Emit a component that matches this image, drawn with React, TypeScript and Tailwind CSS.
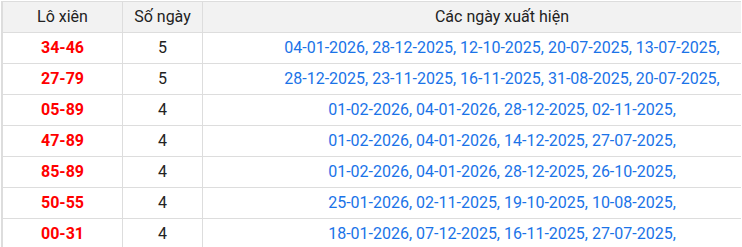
const rows = [
  { pair: '34-46', count: 5, dates: '04-01-2026, 28-12-2025, 12-10-2025, 20-07-2025, 13-07-2025,' },
  { pair: '27-79', count: 5, dates: '28-12-2025, 23-11-2025, 16-11-2025, 31-08-2025, 20-07-2025,' },
  { pair: '05-89', count: 4, dates: '01-02-2026, 04-01-2026, 28-12-2025, 02-11-2025,' },
  { pair: '47-89', count: 4, dates: '01-02-2026, 04-01-2026, 14-12-2025, 27-07-2025,' },
  { pair: '85-89', count: 4, dates: '01-02-2026, 04-01-2026, 28-12-2025, 26-10-2025,' },
  { pair: '50-55', count: 4, dates: '25-01-2026, 02-11-2025, 19-10-2025, 10-08-2025,' },
  { pair: '00-31', count: 4, dates: '18-01-2026, 07-12-2025, 16-11-2025, 27-07-2025,' },
];

export default function App() {
  return (
    <div className="w-[742px] h-[247px] overflow-hidden bg-white pl-px pt-px font-['Roboto',sans-serif] text-[16px]">
      <div className="w-[740px] border-l-2 border-t border-[#dddddd]">
        {/* Header */}
        <div className="flex h-[31px] bg-[#f2f2f2] border-b border-[#dddddd] text-[#222222]">
          <div className="w-[120px] flex items-center justify-center border-r border-[#dddddd]">Lô xiên</div>
          <div className="w-[80px] flex items-center justify-center border-r border-[#dddddd]">Số ngày</div>
          <div className="flex-1 flex items-center justify-center pl-[60px]">Các ngày xuất hiện</div>
        </div>

        {rows.map((row) => (
          <div key={row.pair} className="flex h-[31px] border-b border-[#dddddd]">
            <div className="w-[120px] flex items-center justify-center border-r border-[#dddddd] font-bold text-[#ff0000]">
              {row.pair}
            </div>
            <div className="w-[80px] flex items-center justify-center border-r border-[#dddddd] text-[#222222]">
              {row.count}
            </div>
            <div className="flex-1 flex items-center justify-center pl-[60px] text-[#1a73e8] whitespace-nowrap">
              {row.dates}
            </div>
          </div>
        ))}
      </div>
    </div>
  );
}
